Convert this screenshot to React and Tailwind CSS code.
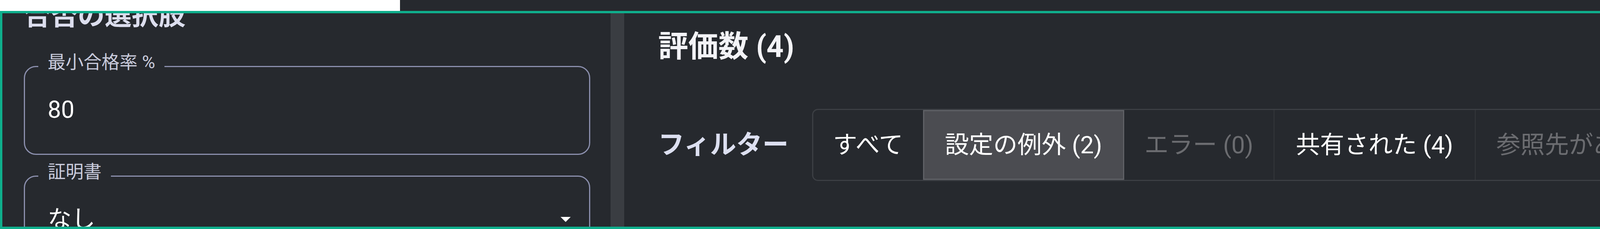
const filters = [
  { label: "すべて", count: null, width: "w-[281px]" },
  { label: "設定の例外", count: 2, width: "w-[515px]", active: true },
  { label: "エラー", count: 0, width: "w-[383px]", disabled: true },
  { label: "共有された", count: 4, width: "w-[515px]" },
  { label: "参照先がありません", count: 0, width: "w-[758px]", disabled: true },
];

function OutlinedField({ label, children, className = "" }) {
  return (
    <fieldset
      className={`rounded-[31px] border-[3px] border-[#8b8fad] pl-[58px] pr-[47px] ${className}`}
    >
      <legend className="ml-[-24px] px-[24px] pb-[22px] text-[46px] leading-none text-[#c9cbdc]">
        {label}
      </legend>
      {children}
    </fieldset>
  );
}

function DropArrow() {
  return (
    <svg width="26" height="13" viewBox="7 10 10 5" className="shrink-0">
      <path d="M7 10l5 5 5-5z" fill="#ffffff" />
    </svg>
  );
}

export default function App() {
  return (
    <div className="flex h-[587px] w-[4807px] flex-col overflow-hidden bg-[#26292e] font-['Roboto','Noto_Sans_CJK_JP',sans-serif]">
      <div className="flex h-[28px] shrink-0">
        <div className="w-[1024px] bg-white" />
        <div className="flex-1 bg-[#26292e]" />
      </div>

      <div className="flex h-[559px] shrink-0">
        <div className="flex h-full min-w-0 flex-1 border-[6px] border-[#0fae8c] bg-[#26292e]">
          {/* settings column */}
          <aside className="w-[1557px] shrink-0 overflow-hidden pl-[55px] pr-[52px]">
            <h2 className="mt-[-28px] text-[69px] font-bold leading-none text-[#dcdeee]">
              合否の選択肢
            </h2>
            <OutlinedField label="最小合格率 %" className="mt-[61px] h-[261px]">
              <div className="flex h-[154px] items-center text-[61px] leading-none text-white">
                80
              </div>
            </OutlinedField>
            <OutlinedField label="証明書" className="mt-[20px] h-[261px]">
              <div className="flex h-[154px] items-center justify-between text-[61px] leading-none text-white">
                <span>なし</span>
                <DropArrow />
              </div>
            </OutlinedField>
          </aside>

          <div className="w-[35px] shrink-0 bg-[#3a3d42]" />

          {/* results */}
          <main className="min-w-0 flex-1 overflow-hidden pl-[87px] pt-[48px]">
            <h1 className="text-[77px] font-bold leading-none text-[#f3f3f7]">評価数 (4)</h1>
            <div className="mt-[120px] flex items-center gap-[60px]">
              <span className="shrink-0 text-[67px] font-bold leading-none text-[#dcdff0]">
                フィルター
              </span>
              <div className="flex h-[185px] shrink-0 overflow-hidden rounded-[15px] border-[3px] border-[#3c3f44]">
                {filters.map((f, i) => (
                  <button
                    key={f.label}
                    className={`flex shrink-0 items-center justify-center whitespace-nowrap text-[62px] leading-none ${f.width} ${
                      f.active
                        ? "border-[3px] border-[#5f6166] bg-[#4b4c51] text-white"
                        : f.disabled
                        ? "text-[#6b6c70]"
                        : "text-white"
                    } ${i > 0 && !f.active && !filters[i - 1].active ? "border-l border-[#404347]" : ""}`}
                  >
                    {f.label}
                    {f.count !== null && ` (${f.count})`}
                  </button>
                ))}
              </div>
            </div>
          </main>
        </div>

        <div className="flex w-[160px] shrink-0 flex-col">
          <div className="h-[109px] shrink-0" />
          <div className="h-[2px] shrink-0 bg-[#43464c]" />
          <div className="flex-1" />
          <div className="h-[38px] w-[135px] shrink-0 rounded-tr-[22px] bg-[#34374f]" />
          <div className="h-[57px] shrink-0 bg-white" />
        </div>
      </div>
    </div>
  );
}
